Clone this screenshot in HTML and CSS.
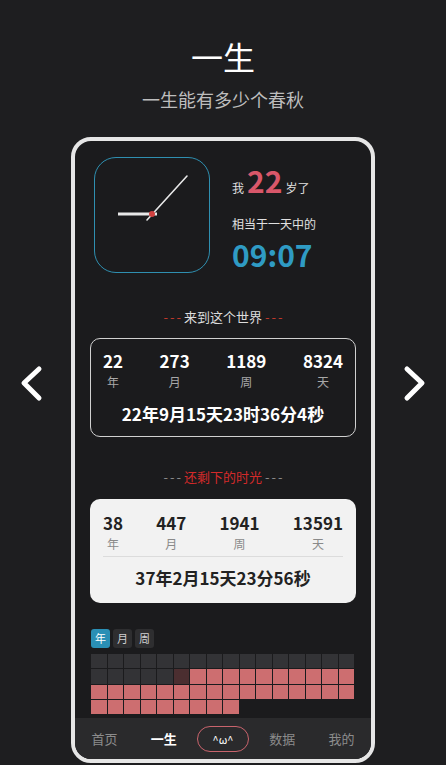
FILE: index.html
```html
<!DOCTYPE html>
<html lang="zh-CN">
<head>
    <meta charset="UTF-8">
    <meta name="viewport" content="width=device-width, initial-scale=1.0">
    <title>一生</title>
    <link rel="stylesheet" href="styles.css">
</head>
<body>
    <div class="header">
        <h1>一生</h1>
        <p class="subtitle">一生能有多少个春秋</p>
    </div>

    <a class="arrow arrow-left" href="#">
        <svg width="26" height="40" viewBox="0 0 26 40"><polyline points="21,6 6,20 21,35"/></svg>
    </a>
    <a class="arrow arrow-right" href="#">
        <svg width="26" height="40" viewBox="0 0 26 40"><polyline points="5,6 20,20 5,35"/></svg>
    </a>

    <div class="phone">
        <div class="phone-body">
            <div class="clock-row">
                <div class="clock">
                    <svg width="116" height="116" viewBox="0 0 116 116">
                        <line x1="24" y1="57" x2="63" y2="57" class="hand-hour"/>
                        <line x1="53" y1="63" x2="93" y2="19" class="hand-minute"/>
                        <circle cx="58" cy="57" r="3" fill="#d0403f"/>
                    </svg>
                </div>
                <div class="age">
                    <div class="age-line">我<span class="age-num">22</span>岁了</div>
                    <div class="age-hint">相当于一天中的</div>
                    <div class="age-time">09:07</div>
                </div>
            </div>

            <div class="section-title"><span class="dash dash-red">---</span>来到这个世界<span class="dash dash-red">---</span></div>
            <div class="stats">
                <div class="stat-row">
                    <div class="stat"><div class="num">22</div><div class="label">年</div></div>
                    <div class="stat"><div class="num">273</div><div class="label">月</div></div>
                    <div class="stat"><div class="num">1189</div><div class="label">周</div></div>
                    <div class="stat"><div class="num">8324</div><div class="label">天</div></div>
                </div>
                <div class="total">22年9月15天23时36分4秒</div>
            </div>

            <div class="section-title section-left"><span class="dash dash-gray">---</span>还剩下的时光<span class="dash dash-gray">---</span></div>
            <div class="stats stats-light">
                <div class="stat-row">
                    <div class="stat"><div class="num">38</div><div class="label">年</div></div>
                    <div class="stat"><div class="num">447</div><div class="label">月</div></div>
                    <div class="stat"><div class="num">1941</div><div class="label">周</div></div>
                    <div class="stat"><div class="num">13591</div><div class="label">天</div></div>
                </div>
                <div class="total">37年2月15天23分56秒</div>
            </div>

            <div class="tabs">
                <span class="tab active">年</span>
                <span class="tab">月</span>
                <span class="tab">周</span>
            </div>

            <div class="grid">
                <div class="cell"></div><div class="cell"></div><div class="cell"></div><div class="cell"></div>
                <div class="cell"></div><div class="cell"></div><div class="cell"></div><div class="cell"></div>
                <div class="cell"></div><div class="cell"></div><div class="cell"></div><div class="cell"></div>
                <div class="cell"></div><div class="cell"></div><div class="cell"></div><div class="cell"></div>

                <div class="cell"></div><div class="cell"></div><div class="cell"></div><div class="cell"></div>
                <div class="cell"></div><div class="cell now"></div><div class="cell left"></div><div class="cell left"></div>
                <div class="cell left"></div><div class="cell left"></div><div class="cell left"></div><div class="cell left"></div>
                <div class="cell left"></div><div class="cell left"></div><div class="cell left"></div><div class="cell left"></div>

                <div class="cell left"></div><div class="cell left"></div><div class="cell left"></div><div class="cell left"></div>
                <div class="cell left"></div><div class="cell left"></div><div class="cell left"></div><div class="cell left"></div>
                <div class="cell left"></div><div class="cell left"></div><div class="cell left"></div><div class="cell left"></div>
                <div class="cell left"></div><div class="cell left"></div><div class="cell left"></div><div class="cell left"></div>

                <div class="cell left"></div><div class="cell left"></div><div class="cell left"></div><div class="cell left"></div>
                <div class="cell left"></div><div class="cell left"></div><div class="cell left"></div><div class="cell left"></div>
                <div class="cell left"></div>
            </div>
        </div>

        <div class="nav">
            <a class="nav-item" href="#">首页</a>
            <a class="nav-item active" href="#">一生</a>
            <a class="nav-item" href="#"><span class="pill">^ω^</span></a>
            <a class="nav-item" href="#">数据</a>
            <a class="nav-item" href="#">我的</a>
        </div>
    </div>
</body>
</html>
```

FILE: styles.css
```css
body {
    margin: 0;
    height: 765px;
    overflow: hidden;
    position: relative;
    background-color: #1e1e20;
    color: #fff;
    font-family: "Noto Sans CJK SC", "Noto Sans", sans-serif;
}
a {
    color: inherit;
    text-decoration: none;
}
.header {
    text-align: center;
    padding-top: 34px;
}
h1 {
    margin: 0;
    font-size: 32px;
    font-weight: 400;
    line-height: 44px;
}
.subtitle {
    margin: 8px 0 0;
    font-size: 18px;
    line-height: 26px;
    color: #bdbdbd;
}
.arrow {
    position: absolute;
    top: 50%;
    transform: translateY(-50%);
    display: block;
    height: 40px;
}
.arrow-left {
    left: 18px;
}
.arrow-right {
    right: 18px;
}
.arrow polyline {
    fill: none;
    stroke: #fff;
    stroke-width: 5;
    stroke-linecap: round;
    stroke-linejoin: round;
}
.phone {
    box-sizing: border-box;
    width: 304px;
    height: 626px;
    margin: 25px auto 0;
    border: 4px solid #e6e6e6;
    border-radius: 20px;
    background-color: #1b1b1d;
    display: flex;
    flex-direction: column;
    overflow: hidden;
}
.phone-body {
    flex: 1;
    padding: 16px 15px 0;
    overflow: hidden;
}
.clock-row {
    display: flex;
    padding-left: 4px;
    gap: 22px;
}
.clock {
    box-sizing: border-box;
    width: 116px;
    height: 116px;
    border: 1.5px solid #2f8fb0;
    border-radius: 22px;
}
.clock svg {
    display: block;
    margin: -1.5px;
}
.hand-hour {
    stroke: #e8e8e8;
    stroke-width: 3;
}
.hand-minute {
    stroke: #e8e8e8;
    stroke-width: 1.6;
    stroke-linecap: round;
}
.age {
    padding-top: 5px;
}
.age-line {
    font-size: 12px;
    color: #e0e0e0;
    line-height: 36px;
}
.age-num {
    font-size: 30px;
    font-weight: 700;
    color: #d9576a;
    margin: 0 3px;
}
.age-hint {
    font-size: 12px;
    color: #e0e0e0;
    line-height: 18px;
    margin-top: 9px;
}
.age-time {
    font-size: 30px;
    font-weight: 700;
    color: #2f9bc4;
    line-height: 38px;
    margin-top: 2px;
}
.section-title {
    text-align: center;
    font-size: 13px;
    line-height: 20px;
    color: #dcdcdc;
    margin: 34px 0 11px;
}
.section-left {
    color: #d42a2a;
    margin: 30px 0 12px;
}
.dash {
    letter-spacing: 2px;
    margin: 0 1px 0 3px;
}
.dash-red {
    color: #c0392b;
}
.dash-gray {
    color: #8a8a8a;
}
.stats {
    border: 1.5px solid #d0d0d0;
    border-radius: 10px;
    padding: 11px 12px 11px;
}
.stat-row {
    display: flex;
    justify-content: space-between;
}
.stat {
    text-align: center;
}
.num {
    font-size: 17px;
    font-weight: 700;
    line-height: 21px;
}
.label {
    font-size: 12px;
    line-height: 16px;
    margin-top: 3px;
    color: #a8a8a8;
}
.total {
    text-align: center;
    font-size: 17px;
    font-weight: 700;
    line-height: 22px;
    margin-top: 13px;
}
.stats-light {
    border: none;
    background-color: #f2f2f2;
    color: #222;
    padding: 13px 13px 14px;
}
.stats-light .label {
    color: #8a8a8a;
}
.stats-light .total {
    margin-top: 4px;
    padding-top: 10px;
    border-top: 1px solid #dcdcdc;
}
.tabs {
    display: flex;
    gap: 3px;
    margin-top: 26px;
    padding-left: 1px;
}
.tab {
    width: 19px;
    height: 19px;
    line-height: 19px;
    text-align: center;
    font-size: 11px;
    border-radius: 3px;
    background-color: #2e2e30;
    color: #d0d0d0;
}
.tab.active {
    background-color: #2a8fb5;
    color: #fff;
}
.grid {
    display: grid;
    grid-template-columns: repeat(16, 1fr);
    gap: 1px;
    width: 263px;
    margin: 6px 0 0 1px;
}
.cell {
    height: 14.3px;
    background-color: #333336;
}
.cell.now {
    background-color: #4b2e30;
}
.cell.left {
    background-color: #cd6e70;
}
.nav {
    height: 41px;
    display: flex;
    align-items: center;
    background-color: #2a2a2c;
}
.nav-item {
    flex: 1;
    text-align: center;
    font-size: 13px;
    color: #8c8c8c;
}
.nav-item.active {
    color: #fff;
    font-weight: 700;
}
.pill {
    display: inline-block;
    width: 52px;
    height: 26px;
    line-height: 24px;
    box-sizing: border-box;
    border: 1.5px solid #c9646d;
    border-radius: 13px;
    font-size: 11px;
    color: #fff;
}
```
